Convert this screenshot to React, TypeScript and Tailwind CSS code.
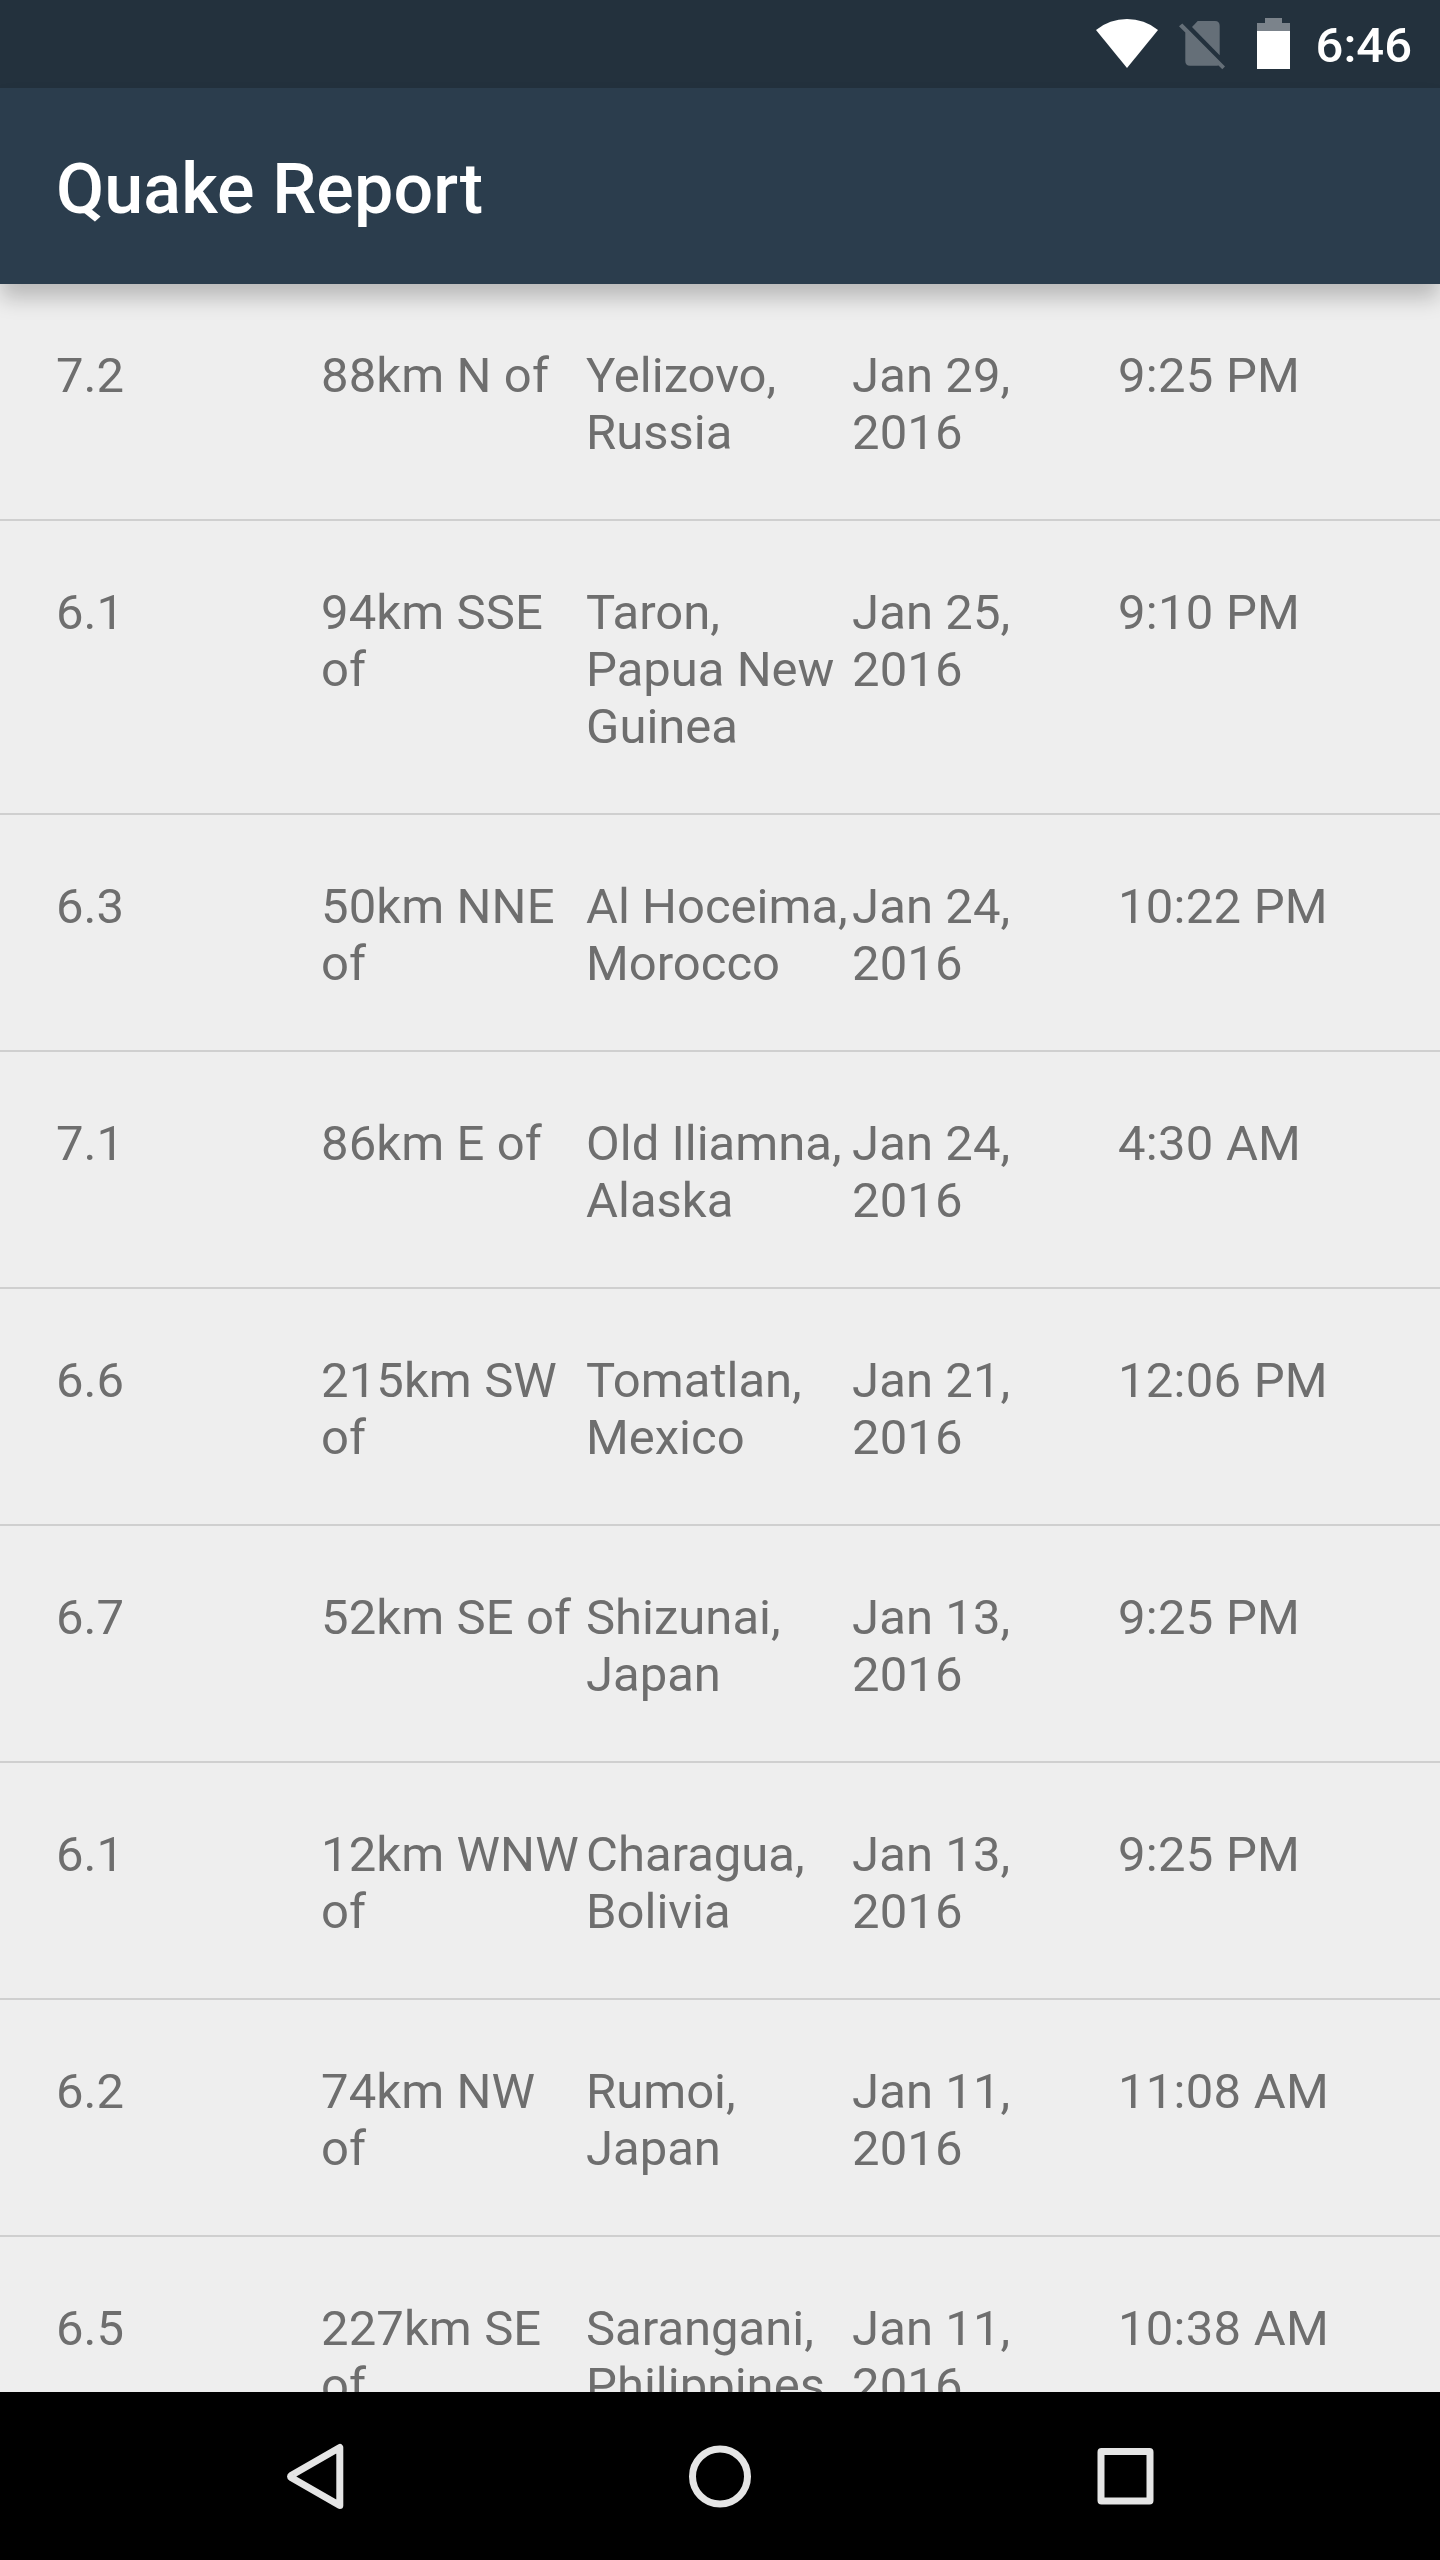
const quakes = [
  { mag: "7.2", offset: "88km N of", place: "Yelizovo,\nRussia", date: "Jan 29,\n2016", time: "9:25 PM" },
  { mag: "6.1", offset: "94km SSE\nof", place: "Taron,\nPapua New\nGuinea", date: "Jan 25,\n2016", time: "9:10 PM" },
  { mag: "6.3", offset: "50km NNE\nof", place: "Al Hoceima,\nMorocco", date: "Jan 24,\n2016", time: "10:22 PM" },
  { mag: "7.1", offset: "86km E of", place: "Old Iliamna,\nAlaska", date: "Jan 24,\n2016", time: "4:30 AM" },
  { mag: "6.6", offset: "215km SW\nof", place: "Tomatlan,\nMexico", date: "Jan 21,\n2016", time: "12:06 PM" },
  { mag: "6.7", offset: "52km SE of", place: "Shizunai,\nJapan", date: "Jan 13,\n2016", time: "9:25 PM" },
  { mag: "6.1", offset: "12km WNW\nof", place: "Charagua,\nBolivia", date: "Jan 13,\n2016", time: "9:25 PM" },
  { mag: "6.2", offset: "74km NW\nof", place: "Rumoi,\nJapan", date: "Jan 11,\n2016", time: "11:08 AM" },
  { mag: "6.5", offset: "227km SE\nof", place: "Sarangani,\nPhilippines", date: "Jan 11,\n2016", time: "10:38 AM" },
];

function StatusBar() {
  return (
    <div className="flex h-[88px] shrink-0 items-center justify-end bg-[#23313d] pr-[28px] text-white">
      <svg className="mr-[21px] h-[50px] w-[62px]" viewBox="0 0 62 50" fill="currentColor">
        <path d="M31 49 L0 11 A49.2 49.2 0 0 1 62 11 Z" />
      </svg>
      <svg className="mr-[32px] h-[52px] w-[46px]" viewBox="0 0 46 52" fill="#656f78">
        <path d="M18.700 3 H36 Q40.700 3 40.700 8 V37.300 L13 9 Z" />
        <path d="M0 8.300 L3.300 5.500 L46 48.500 L43.300 51.300 L39.500 47.400 Q38 47.700 36 47.700 H11 Q6.300 47.700 6.300 43 V14.500 Z" />
      </svg>
      <svg className="mr-[26px] h-[52px] w-[33px]" viewBox="0 0 33 52">
        <path d="M8 0 H25 V5 H33 V14 H0 V5 H8 Z" fill="#7b838b" />
        <rect y="13" width="33" height="38" fill="#fff" />
      </svg>
      <span className="pt-[3px] text-[49px] leading-[57px] font-medium">6:46</span>
    </div>
  );
}

function NavigationBar() {
  return (
    <nav className="grid h-[168px] shrink-0 grid-cols-[405px_405px_405px] items-center justify-center bg-black text-[#e5e5e5]">
      {["back", "home", "recents"].map((key) => (
        <button key={key} aria-label={key} className="flex items-center justify-center">
          <svg className="h-[84px] w-[84px]" viewBox="0 0 84 84" fill="none" stroke="currentColor" strokeWidth="7" strokeLinejoin="round">
            {key === "back" && <path d="M66.800 13.500 V71.500 L18.500 43.800 Q16.500 42.500 18.500 41.200 Z" />}
            {key === "home" && <circle cx="42" cy="42.500" r="27.500" />}
            {key === "recents" && <rect x="18" y="17.500" width="49" height="49.500" rx="0.500" />}
          </svg>
        </button>
      ))}
    </nav>
  );
}

export default function App() {
  return (
    <div className="flex h-[2560px] w-[1440px] flex-col overflow-hidden bg-[#eeeeee] font-[Roboto,sans-serif]">
      <StatusBar />
      <header className="relative z-10 flex h-[196px] shrink-0 items-center bg-[#2b3d4d] px-[56px] pt-[6px] shadow-[0_15px_20px_-1px_rgba(0,0,0,0.22)]">
        <h1 className="text-[70px] leading-[82px] font-medium tracking-[0.1px] text-white">Quake Report</h1>
      </header>
      <ul className="min-h-0 flex-1 overflow-hidden">
        {quakes.map((q, i) => (
          <li
            key={i}
            className="grid grid-cols-[265px_265px_266px_266px_266px] border-b-2 border-[#cfcfcf] px-[56px] pt-[63px] pb-[58px] text-[49px] leading-[57px] whitespace-pre text-[#6e6e6e]"
          >
            <span>{q.mag}</span>
            <span className="tracking-[0.1px]">{q.offset}</span>
            <span>{q.place}</span>
            <span className="tracking-[0.1px]">{q.date}</span>
            <span className="tracking-[0.25px]">{q.time}</span>
          </li>
        ))}
      </ul>
      <NavigationBar />
    </div>
  );
}
